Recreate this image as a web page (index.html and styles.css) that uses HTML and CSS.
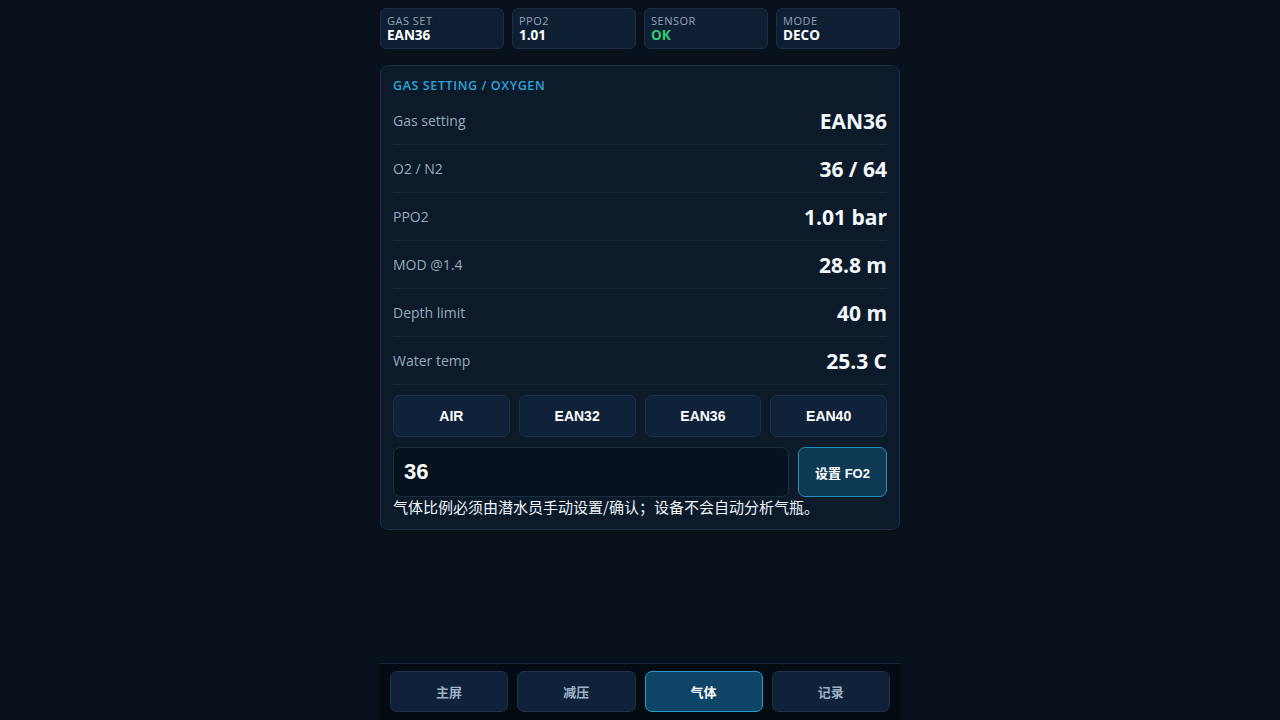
FILE: index.html
```html
<!DOCTYPE html>
<html lang="zh">
<head>
    <meta charset="UTF-8">
    <meta name="viewport" content="width=device-width, initial-scale=1.0">
    <title>Gas</title>
    <link rel="stylesheet" href="styles.css">
</head>
<body>
    <div class="app">
        <div class="status">
            <div class="stat">
                <div class="stat-label">GAS SET</div>
                <div class="stat-value">EAN36</div>
            </div>
            <div class="stat">
                <div class="stat-label">PPO2</div>
                <div class="stat-value">1.01</div>
            </div>
            <div class="stat">
                <div class="stat-label">SENSOR</div>
                <div class="stat-value ok">OK</div>
            </div>
            <div class="stat">
                <div class="stat-label">MODE</div>
                <div class="stat-value">DECO</div>
            </div>
        </div>

        <div class="panel">
            <div class="panel-title">GAS SETTING / OXYGEN</div>
            <div class="row"><span class="label">Gas setting</span><span class="value">EAN36</span></div>
            <div class="row"><span class="label">O2 / N2</span><span class="value">36 / 64</span></div>
            <div class="row"><span class="label">PPO2</span><span class="value">1.01 bar</span></div>
            <div class="row"><span class="label">MOD @1.4</span><span class="value">28.8 m</span></div>
            <div class="row"><span class="label">Depth limit</span><span class="value">40 m</span></div>
            <div class="row"><span class="label">Water temp</span><span class="value">25.3 C</span></div>

            <div class="presets">
                <button class="preset">AIR</button>
                <button class="preset">EAN32</button>
                <button class="preset">EAN36</button>
                <button class="preset">EAN40</button>
            </div>

            <div class="fo2">
                <input class="fo2-in" type="text" value="36" autocomplete="off">
                <button class="fo2-set">设置 FO2</button>
            </div>
            <div class="note">气体比例必须由潜水员手动设置/确认；设备不会自动分析气瓶。</div>
        </div>

        <div class="spacer"></div>

        <div class="nav">
            <button class="tab">主屏</button>
            <button class="tab">减压</button>
            <button class="tab active">气体</button>
            <button class="tab">记录</button>
        </div>
    </div>
</body>
</html>
```

FILE: styles.css
```css
* {
    box-sizing: border-box;
    margin: 0;
    padding: 0;
}

html, body {
    height: 100%;
}

body {
    background: #07101b;
    color: #eef4fa;
    font-family: "Open Sans", "Noto Sans", "Noto Sans CJK SC", sans-serif;
}

.app {
    width: 520px;
    height: 720px;
    margin: 0 auto;
    padding-top: 8px;
    display: flex;
    flex-direction: column;
}

.status {
    display: grid;
    grid-template-columns: repeat(4, 1fr);
    gap: 8px;
}

.stat {
    height: 41px;
    background: #0f1f33;
    border: 1px solid #1d2e43;
    border-radius: 6px;
    padding: 5px 6px;
}

.stat-label {
    font-size: 11px;
    line-height: 13px;
    color: #8fa3b8;
    letter-spacing: 0.5px;
}

.stat-value {
    font-size: 13.5px;
    line-height: 16px;
    font-weight: 700;
    color: #ffffff;
}

.stat-value.ok {
    color: #2ecc71;
}

.panel {
    margin-top: 16px;
    background: #0c1a2a;
    border: 1px solid #1c2e42;
    border-radius: 8px;
    padding: 12px;
}

.panel-title {
    font-size: 12.5px;
    font-weight: 600;
    color: #2aa6dc;
    letter-spacing: 0.6px;
    line-height: 16px;
    margin-bottom: 3px;
}

.row {
    height: 48px;
    display: flex;
    align-items: center;
    justify-content: space-between;
    border-bottom: 1px solid #16283a;
}

.label {
    font-size: 14px;
    color: #98aabd;
}

.value {
    font-size: 21px;
    font-weight: 700;
    color: #f3f8fc;
}

.presets {
    display: grid;
    grid-template-columns: repeat(4, 1fr);
    gap: 9px;
    margin-top: 10px;
}

button {
    font-family: "Liberation Sans", "Noto Sans CJK SC", sans-serif;
    font-weight: 700;
    cursor: pointer;
}

.preset {
    height: 42px;
    background: #10213a;
    border: 1px solid #1f3249;
    border-radius: 7px;
    color: #ffffff;
    font-size: 14px;
}

.fo2 {
    display: flex;
    gap: 9px;
    margin-top: 10px;
}

.fo2-in {
    flex: 1;
    height: 50px;
    background: #06121d;
    border: 1px solid #1c2d40;
    border-radius: 7px;
    color: #ffffff;
    font-family: "Liberation Sans", sans-serif;
    font-weight: 700;
    font-size: 22px;
    padding: 0 10px;
    outline: none;
}

.fo2-set {
    width: 89px;
    height: 50px;
    background: #0f3a56;
    border: 1px solid #238fb8;
    border-radius: 7px;
    color: #ffffff;
    font-size: 13px;
}

.note {
    font-size: 15px;
    line-height: 20px;
    color: #eef4fa;
    font-family: "Noto Sans CJK SC", sans-serif;
}

.spacer {
    flex: 1;
}

.nav {
    background: #050b12;
    border-top: 1px solid #142233;
    display: grid;
    grid-template-columns: repeat(4, 1fr);
    gap: 9px;
    padding: 7px 10px 8px 10px;
}

.tab {
    height: 41px;
    background: #10213a;
    border: 1px solid #1f3249;
    border-radius: 7px;
    color: #9eb2c6;
    font-size: 13px;
    font-family: "Noto Sans CJK SC", sans-serif;
}

.tab.active {
    background: #0e4466;
    border-color: #2a9fcc;
    color: #ffffff;
}
```
